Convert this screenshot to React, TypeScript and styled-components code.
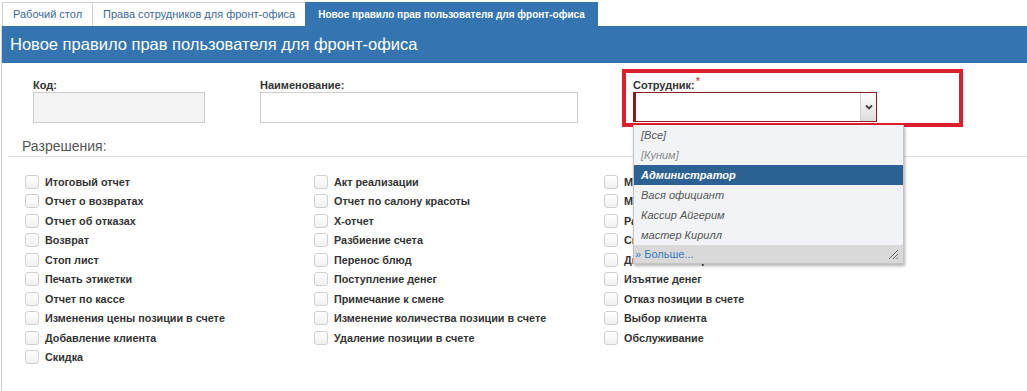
import React from "react";
import styled, { createGlobalStyle } from "styled-components";

const GlobalStyle = createGlobalStyle`
  html, body { margin: 0; padding: 0; background: #fff; }
  body { font-family: "Liberation Sans", Arial, sans-serif; overflow: hidden; }
  * { box-sizing: border-box; }
`;

const Screen = styled.div`
  position: relative;
  width: 1027px;
  height: 391px;
  overflow: hidden;
  background: #fff;
`;

const TabBar = styled.div`
  display: flex;
  height: 26px;
  padding: 2px 0 0 2px;
`;

const Tab = styled.div<{ $active?: boolean }>`
  height: 24px;
  line-height: 23px;
  padding: 0 ${(p) => (p.$active ? "12px" : "10px")};
  margin-left: -1px;
  font-size: ${(p) => (p.$active ? "10px" : "11px")};
  font-weight: ${(p) => (p.$active ? "bold" : "normal")};
  color: ${(p) => (p.$active ? "#fff" : "#3a6896")};
  background: ${(p) => (p.$active ? "#3475b1" : "#fff")};
  border: 1px solid ${(p) => (p.$active ? "#3475b1" : "#d0d0d0")};
  border-bottom: none;
  white-space: nowrap;
  &:first-child { margin-left: 0; }
`;

const Panel = styled.div`
  margin-left: 1px;
  border-left: 1px solid #cfcfcf;
  height: 365px;
`;

const Header = styled.div`
  height: 37px;
  line-height: 37px;
  background: #3475b1;
  color: #fff;
  font-size: 16.5px;
  padding-left: 8px;
  white-space: nowrap;
`;

const FormRow = styled.div`
  display: grid;
  grid-template-columns: 172px 318px 244px;
  column-gap: 55px;
  padding: 16px 0 0 31px;
`;

const Field = styled.div`
  display: flex;
  flex-direction: column;
`;

const Label = styled.div`
  font-size: 11px;
  font-weight: bold;
  color: #333;
  line-height: 13px;
  height: 13px;
  white-space: nowrap;
`;

const Req = styled.span`
  color: #d8202c;
  font-weight: normal;
  position: relative;
  top: -4px;
  margin-left: 1px;
`;

const TextInput = styled.div<{ $disabled?: boolean }>`
  height: 31px;
  border: 1px solid #cccccc;
  background: ${(p) => (p.$disabled ? "#f4f4f4" : "#fff")};
`;

const SelectBox = styled.div`
  height: 30px;
  display: flex;
  justify-content: flex-end;
  border: 1px solid #8c1b1b;
  border-left: 3px solid #8c1b1b;
  background: #fff;
`;

const SelectArrow = styled.div`
  width: 16px;
  display: flex;
  align-items: center;
  justify-content: center;
  border-left: 1px solid #cfcfcf;
  background: linear-gradient(#ffffff, #dcdcdc);
`;

const SectionTitle = styled.div`
  margin: 15px 0 0 6px;
  padding: 0 0 1px 14px;
  font-size: 14px;
  line-height: 17px;
  color: #555;
  border-bottom: 1px solid #dedede;
`;

const Columns = styled.div`
  display: grid;
  grid-template-columns: 289px 290px 290px;
  padding: 15px 0 0 23px;
`;

const Column = styled.div`
  display: flex;
  flex-direction: column;
`;

const CheckItem = styled.label`
  display: flex;
  align-items: center;
  height: 19.5px;
  gap: 6px;
  font-size: 10.8px;
  font-weight: bold;
  color: #333;
  white-space: nowrap;
`;

const Box = styled.span`
  width: 14px;
  height: 14px;
  flex: none;
  border: 1px solid #cfcfcf;
  border-radius: 3px;
  background: linear-gradient(#ffffff, #f0f0f0);
`;

const RedFrame = styled.div`
  position: absolute;
  left: 622px;
  top: 69px;
  width: 341px;
  height: 58px;
  border: 4px solid #dc1f2b;
  pointer-events: none;
`;

const Dropdown = styled.div`
  position: absolute;
  left: 633px;
  top: 125px;
  width: 271px;
  background: #f1f3f7;
  border: 1px solid #c4c4c4;
  border-top: none;
  box-shadow: 1px 2px 3px rgba(0, 0, 0, 0.3);
`;

const Option = styled.div<{ $selected?: boolean; $muted?: boolean }>`
  height: 20px;
  line-height: 20px;
  padding-left: 7px;
  font-size: 11px;
  font-style: italic;
  font-weight: ${(p) => (p.$selected ? "bold" : "normal")};
  color: ${(p) => (p.$selected ? "#fff" : p.$muted ? "#8a8a8a" : "#555")};
  background: ${(p) => (p.$selected ? "#2c6194" : "transparent")};
`;

const DropFooter = styled.div`
  height: 18px;
  display: flex;
  align-items: center;
  justify-content: space-between;
  padding: 0 4px 0 1px;
  background: #d9d9d9;
  font-size: 11px;
  color: #3a7ac0;
`;

const Chevron = () => (
  <svg width="8" height="6" viewBox="0 0 8 6">
    <path d="M1 1.5 L4 4.5 L7 1.5" fill="none" stroke="#444" strokeWidth="1.8" />
  </svg>
);

const Grip = () => (
  <svg width="12" height="12" viewBox="0 0 12 12">
    <path d="M11 2 L2 11 M11 6 L6 11 M11 9.5 L9.5 11" stroke="#666" strokeWidth="1" />
  </svg>
);

const col1 = [
  "Итоговый отчет",
  "Отчет о возвратах",
  "Отчет об отказах",
  "Возврат",
  "Стоп лист",
  "Печать этикетки",
  "Отчет по кассе",
  "Изменения цены позиции в счете",
  "Добавление клиента",
  "Скидка",
];
const col2 = [
  "Акт реализации",
  "Отчет по салону красоты",
  "X-отчет",
  "Разбиение счета",
  "Перенос блюд",
  "Поступление денег",
  "Примечание к смене",
  "Изменение количества позиции в счете",
  "Удаление позиции в счете",
];
const col3 = [
  "Маркировка товара",
  "Мастер смены",
  "Расходы по смене",
  "Смена официанта",
  "Дисконтная карта",
  "Изъятие денег",
  "Отказ позиции в счете",
  "Выбор клиента",
  "Обслуживание",
];

const options = [
  { t: "[Все]" },
  { t: "[Куним]", muted: true },
  { t: "Администратор", selected: true },
  { t: "Вася официант" },
  { t: "Кассир Айгерим" },
  { t: "мастер Кирилл" },
];

export default function App() {
  return (
    <Screen>
      <GlobalStyle />
      <TabBar>
        <Tab>Рабочий стол</Tab>
        <Tab>Права сотрудников для фронт-офиса</Tab>
        <Tab $active>Новое правило прав пользователя для фронт-офиса</Tab>
      </TabBar>
      <Panel>
        <Header>Новое правило прав пользователя для фронт-офиса</Header>
        <FormRow>
          <Field>
            <Label>Код:</Label>
            <TextInput $disabled />
          </Field>
          <Field>
            <Label>Наименование:</Label>
            <TextInput />
          </Field>
          <Field>
            <Label>
              Сотрудник:<Req>*</Req>
            </Label>
            <SelectBox>
              <SelectArrow>
                <Chevron />
              </SelectArrow>
            </SelectBox>
          </Field>
        </FormRow>
        <SectionTitle>Разрешения:</SectionTitle>
        <Columns>
          {[col1, col2, col3].map((col, i) => (
            <Column key={i}>
              {col.map((t) => (
                <CheckItem key={t}>
                  <Box />
                  {t}
                </CheckItem>
              ))}
            </Column>
          ))}
        </Columns>
      </Panel>
      <RedFrame />
      <Dropdown>
        {options.map((o) => (
          <Option key={o.t} $selected={o.selected} $muted={o.muted}>
            {o.t}
          </Option>
        ))}
        <DropFooter>
          <span>» Больше...</span>
          <Grip />
        </DropFooter>
      </Dropdown>
    </Screen>
  );
}
